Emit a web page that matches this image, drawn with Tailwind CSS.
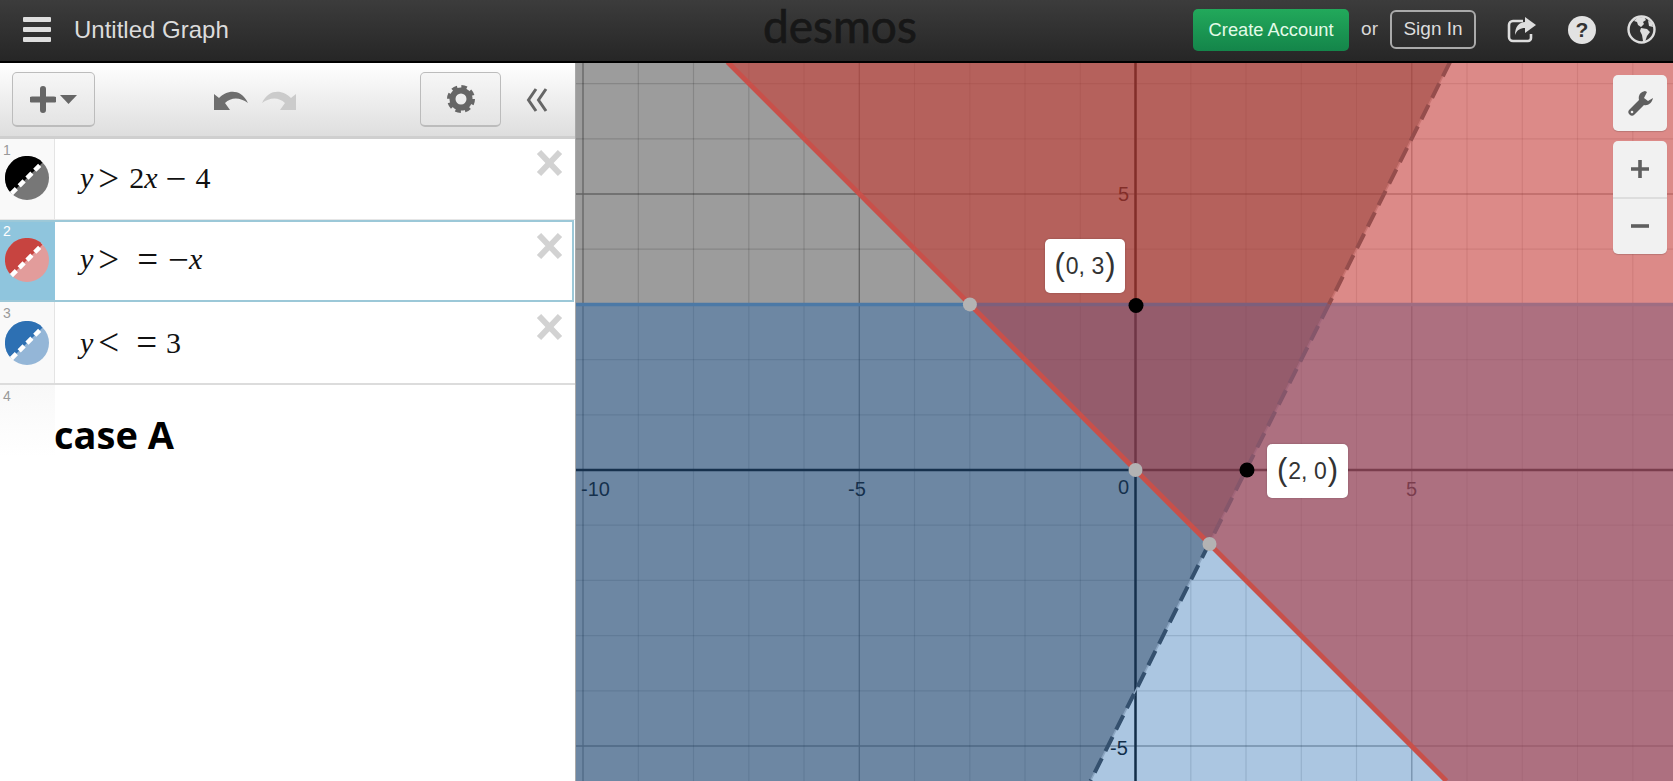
<!DOCTYPE html>
<html lang="en">
<head>
    <meta charset="UTF-8">
    <title>Desmos | Untitled Graph</title>
    <script src="https://cdn.jsdelivr.net/npm/@tailwindcss/browser@4"></script>
</head>
<body class="flex flex-col h-[781px] w-[1673px] overflow-hidden bg-white font-['Liberation_Sans',Arial,sans-serif]">

    <!-- top bar -->
    <header class="relative flex items-center h-[63px] pb-[2px] shrink-0 bg-linear-to-b from-[#3c3c3c] to-[#262626] border-b-2 border-black">
        <div class="flex flex-col gap-[5px] ml-[23px] w-[28px]">
            <span class="h-[5px] rounded-[1px] bg-[#dedede]"></span>
            <span class="h-[5px] rounded-[1px] bg-[#dedede]"></span>
            <span class="h-[5px] rounded-[1px] bg-[#dedede]"></span>
        </div>
        <span class="ml-[23px] text-[24px] text-[#dcdcdc]">Untitled Graph</span>
        <span class="absolute left-[763px] top-[-5px] font-['Lato',sans-serif] text-[46px] leading-[62px] text-[#171717] [-webkit-text-stroke:0.7px_#171717]">desmos</span>

        <div class="ml-auto flex items-center mr-[17px]">
            <a class="flex items-center justify-center w-[156px] h-[42px] rounded-[5px] bg-linear-to-b from-[#22a95b] to-[#14854a] text-[18.3px] text-[#e3fbe8]">Create Account</a>
            <span class="ml-[12px] text-[19px] text-[#d8d8d8]">or</span>
            <a class="ml-[12px] flex items-center justify-center w-[86px] h-[39px] rounded-[6px] border-2 border-[#aaaaaa] text-[19px] text-[#dddddd]">Sign In</a>
            <svg class="ml-[31px]" width="29" height="26" viewBox="0 0 29 26">
                <path d="M16 4H6a4 4 0 0 0-4 4v12a4 4 0 0 0 4 4h15a3 3 0 0 0 3-3v-4" fill="none" stroke="#dedede" stroke-width="2.6"/>
                <path d="M18 0l11 8-11 8v-5c-5 0-8 2-10 7 0-8 4-13 10-13z" fill="#dedede"/>
            </svg>
            <span class="ml-[32px] flex items-center justify-center w-[28px] h-[28px] rounded-full bg-[#e2e2e2] text-[21px] font-bold text-[#333333]">?</span>
            <svg class="ml-[31px]" width="29" height="29" viewBox="0 0 29 29">
                <circle cx="14.5" cy="14.5" r="13" fill="#333333" stroke="#dedede" stroke-width="2.4"/>
                <path d="M10 3l7-1 2 3-3 2 1 2-3 3-3-2-1-3-3-1z" fill="#dedede"/>
                <path d="M14 13l6 1 3 3-3 4-2 6-2-1-1-6-2-4z" fill="#dedede"/>
                <path d="M21 5l4 3 1 4-4-1z" fill="#dedede"/>
            </svg>
        </div>
    </header>

    <main class="flex flex-1 min-h-0">
        <!-- expression list -->
        <aside class="flex flex-col w-[575px] shrink-0 bg-white">
            <div class="relative flex items-center h-[76px] shrink-0 bg-linear-to-b from-white to-[#dedede] border-b-[3px] border-[#cfcfcf]">
                <button class="flex items-center justify-center gap-[4px] ml-[12px] w-[83px] h-[55px] rounded-[5px] border border-[#bcbcbc] bg-linear-to-b from-[#f6f6f6] to-[#e4e4e4] border-b-2">
                    <svg width="26" height="27" viewBox="0 0 26 27"><path d="M13 3v21M2 13.5h22" stroke="#666666" stroke-width="6" stroke-linecap="round"/></svg>
                    <svg width="17" height="9" viewBox="0 0 17 9"><path d="M0 0h17l-8.500 9z" fill="#666666"/></svg>
                </button>
                <svg class="ml-[119px]" width="34" height="20" viewBox="0 0 34 20"><path d="M0 20V4l5 4C12 1 26-3 34 13 26 7 17 7 11 13l5 7z" fill="#6e6e6e"/></svg>
                <svg class="ml-[14px]" width="34" height="20" viewBox="0 0 34 20"><path d="M34 20V4l-5 4C22 1 8-3 0 13 8 7 17 7 23 13l-5 7z" fill="#cbcbcb"/></svg>
                <button class="flex items-center justify-center ml-[124px] w-[81px] h-[55px] rounded-[5px] border border-[#bcbcbc] border-b-2 bg-linear-to-b from-[#f6f6f6] to-[#e4e4e4]">
                    <svg width="28" height="28" viewBox="0 0 28 28">
                        <circle cx="14" cy="14" r="8.500" fill="none" stroke="#666666" stroke-width="6"/>
                        <circle cx="14" cy="14" r="12" fill="none" stroke="#666666" stroke-width="4" stroke-dasharray="5.420 4"/>
                    </svg>
                </button>
                <svg class="ml-[25px]" width="23" height="26" viewBox="0 0 23 26"><path d="M10 2L2.500 13 10 24M20 2l-7.500 11L20 24" fill="none" stroke="#666666" stroke-width="3"/></svg>
            </div>

            <div class="relative flex h-[81px] shrink-0 border-b border-[#e6e6e6]">
                <div class="relative w-[55px] shrink-0 bg-[#f9f9f9] border-r border-[#e4e4e4]">
                    <span class="absolute left-[3px] top-[4px] text-[14px] leading-none text-[#999999]">1</span>
                    <svg class="absolute left-[5px] top-[17px]" width="44" height="44" viewBox="0 0 44 44">
                        <circle cx="22" cy="22" r="22" fill="#777777"/>
                        <path d="M6.400 37.600A22 22 0 0 1 37.600 6.400z" fill="#000000"/>
                        <path d="M6.400 37.600L37.600 6.400" stroke="#ffffff" stroke-width="4.500" stroke-dasharray="7 4"/>
                    </svg>
                </div>
                <div class="flex items-center pl-[25px] pb-[2px] font-['Liberation_Serif',serif] text-[30px] leading-none text-[#111111]"><i>y</i><span class="ml-[5px] mr-[10px] text-[37px]">&gt;</span>2<i>x</i><span class="ml-[8px] mr-[9px] text-[37px]">−</span>4</div>
                <svg class="absolute left-[536px] top-[10px]" width="27" height="28" viewBox="0 0 27 28"><path d="M3 3l21 22M24 3L3 25" stroke="#d2d2d2" stroke-width="6"/></svg>
            </div>

            <div class="relative flex h-[82px] shrink-0 border-2 border-[#9cc8d8] border-l-0 mr-[1px]">
                <div class="relative w-[55px] shrink-0 bg-[#8fc5dd]">
                    <span class="absolute left-[3px] top-[2px] text-[14px] leading-none text-white">2</span>
                    <svg class="absolute left-[5px] top-[16px]" width="44" height="44" viewBox="0 0 44 44">
                        <circle cx="22" cy="22" r="22" fill="#e29c9b"/>
                        <path d="M6.400 37.600A22 22 0 0 1 37.600 6.400z" fill="#c74440"/>
                        <path d="M6.400 37.600L37.600 6.400" stroke="#ffffff" stroke-width="4.500" stroke-dasharray="7 4"/>
                    </svg>
                </div>
                <div class="flex items-center pl-[25px] pb-[4px] font-['Liberation_Serif',serif] text-[30px] leading-none text-[#111111]"><i>y</i><span class="ml-[5px] mr-[18px] text-[37px]">&gt;</span><span class="mr-[10px] text-[37px]">=</span><span class="text-[37px]">−</span><i>x</i></div>
                <svg class="absolute left-[536px] top-[10px]" width="27" height="28" viewBox="0 0 27 28"><path d="M3 3l21 22M24 3L3 25" stroke="#d2d2d2" stroke-width="6"/></svg>
            </div>

            <div class="relative flex h-[83px] shrink-0 border-b-2 border-[#dcdcdc]">
                <div class="relative w-[55px] shrink-0 bg-[#f9f9f9] border-r border-[#e4e4e4]">
                    <span class="absolute left-[3px] top-[4px] text-[14px] leading-none text-[#999999]">3</span>
                    <svg class="absolute left-[5px] top-[19px]" width="44" height="44" viewBox="0 0 44 44">
                        <circle cx="22" cy="22" r="22" fill="#94b6d7"/>
                        <path d="M6.400 37.600A22 22 0 0 1 37.600 6.400z" fill="#2d70b3"/>
                        <path d="M6.400 37.600L37.600 6.400" stroke="#ffffff" stroke-width="4.500" stroke-dasharray="7 4"/>
                    </svg>
                </div>
                <div class="flex items-center pl-[25px] font-['Liberation_Serif',serif] text-[30px] leading-none text-[#111111]"><i>y</i><span class="ml-[5px] mr-[17px] text-[37px]">&lt;</span><span class="mr-[9px] text-[37px]">=</span>3</div>
                <svg class="absolute left-[536px] top-[11px]" width="27" height="28" viewBox="0 0 27 28"><path d="M3 3l21 22M24 3L3 25" stroke="#d2d2d2" stroke-width="6"/></svg>
            </div>

            <div class="relative flex h-[72px] shrink-0">
                <div class="relative w-[55px] shrink-0 bg-linear-to-b from-[#f8f8f8] to-white">
                    <span class="absolute left-[3px] top-[4px] text-[14px] leading-none text-[#999999]">4</span>
                </div>
                <span class="mt-[24px] ml-[-1px] font-['Open_Sans',sans-serif] font-bold text-[38px] leading-[50px] text-black">case A</span>
            </div>
        </aside>

        <!-- graph paper -->
        <section class="relative flex-1 overflow-hidden bg-white border-l border-[#a8a8a8]">
            <svg class="absolute left-[-1px] top-[-1px]" width="1098" height="719" viewBox="575 62 1098 719">
                <!-- minor grid -->
                <g stroke="#000000" stroke-opacity="0.14" stroke-width="1.200">
                    <path d="M638.300 62V781M693.500 62V781M748.800 62V781M804 62V781M914.500 62V781M969.800 62V781M1025 62V781M1080.300 62V781M1190.800 62V781M1246 62V781M1301.300 62V781M1356.500 62V781M1467 62V781M1522.300 62V781M1577.500 62V781M1632.800 62V781"/>
                    <path d="M575 83.600H1673M575 138.800H1673M575 249.200H1673M575 304.400H1673M575 359.600H1673M575 414.800H1673M575 525.200H1673M575 580.400H1673M575 635.600H1673M575 690.800H1673"/>
                </g>
                <!-- major grid -->
                <g stroke="#000000" stroke-opacity="0.36" stroke-width="1.300">
                    <path d="M583 62V781M859.300 62V781M1411.800 62V781M575 194H1673M575 746H1673"/>
                </g>
                <!-- axes -->
                <path d="M1135.500 62V781M575 470H1673" stroke="#000000" stroke-width="2.500"/>

                <!-- tick labels -->
                <g font-family="Liberation Sans, Arial, sans-serif" font-size="20" fill="#000000">
                    <text x="581" y="496">-10</text>
                    <text x="848" y="496">-5</text>
                    <text x="1118" y="494">0</text>
                    <text x="1406" y="496">5</text>
                    <text x="1118" y="201">5</text>
                    <text x="1110" y="755">-5</text>
                </g>

                <!-- shaded regions -->
                <polygon points="575,62 727.500,62 969.900,304.400 575,304.400" fill="#000000" fill-opacity="0.39"/>
                <polygon points="727.500,62 1450,62 1328.900,304.400 969.900,304.400" fill="rgb(162,57,51)" fill-opacity="0.8"/>
                <polygon points="1450,62 1673,62 1673,304.400 1328.900,304.400" fill="rgb(199,70,66)" fill-opacity="0.63"/>
                <polygon points="575,304.400 969.900,304.400 1209.100,543.600 1090.500,781 575,781" fill="rgb(33,73,115)" fill-opacity="0.66"/>
                <polygon points="969.900,304.400 1328.900,304.400 1209.100,543.600" fill="rgb(130,64,82)" fill-opacity="0.85"/>
                <polygon points="1328.900,304.400 1673,304.400 1673,781 1446.500,781 1209.100,543.600" fill="rgb(152,76,96)" fill-opacity="0.8"/>
                <polygon points="1209.100,543.600 1446.500,781 1090.500,781" fill="rgb(45,112,179)" fill-opacity="0.4"/>

                <!-- seams under the dashes, so the paper doesn't show between polygons -->
                <path d="M1450 62L1328.900 304.400" stroke="#c87370" stroke-width="1.500"/>
                <path d="M1328.900 304.400L1209.100 543.600" stroke="#a1667a" stroke-width="1.500"/>
                <path d="M1209.100 543.600L1090.500 781" stroke="#8ca6c2" stroke-width="1.500"/>

                <!-- boundary lines -->
                <path d="M575 304.400H969.900" stroke="#4c79a6" stroke-width="3.500"/>
                <path d="M969.900 304.400H1328.900" stroke="#7d5f7c" stroke-width="3.500"/>
                <path d="M1328.900 304.400H1673" stroke="#9f6d82" stroke-width="3.500"/>
                <path d="M1450 62L1328.900 304.400" stroke="#954d4c" stroke-width="4" stroke-dasharray="16 8"/>
                <path d="M1328.900 304.400L1209.100 543.600" stroke="#85566a" stroke-width="4" stroke-dasharray="16 8"/>
                <path d="M1209.100 543.600L1090.500 781" stroke="#34506e" stroke-width="4" stroke-dasharray="16 8"/>
                <path d="M727.500 62L1446.500 781" stroke="#c8504a" stroke-width="5"/>

                <!-- points -->
                <circle cx="969.900" cy="304.400" r="7" fill="#b3b3b3"/>
                <circle cx="1135.500" cy="470" r="7" fill="#b3b3b3"/>
                <circle cx="1209.500" cy="544" r="7" fill="#b3b3b3"/>
                <circle cx="1136" cy="305.500" r="7.500" fill="#000000"/>
                <circle cx="1247" cy="470" r="7.500" fill="#000000"/>
            </svg>

            <!-- point labels -->
            <div class="absolute left-[469px] top-[176px] flex items-center justify-center w-[80px] h-[54px] rounded-[5px] bg-white text-[#333333] shadow-[0_0_2px_rgba(0,0,0,0.25)]">
                <span class="text-[31px] font-light leading-none pb-[3px]">(</span><span class="text-[23px] mx-[1px]">0, 3</span><span class="text-[31px] font-light leading-none pb-[3px]">)</span>
            </div>
            <div class="absolute left-[691px] top-[381px] flex items-center justify-center w-[81px] h-[54px] rounded-[5px] bg-white text-[#333333] shadow-[0_0_2px_rgba(0,0,0,0.25)]">
                <span class="text-[31px] font-light leading-none pb-[3px]">(</span><span class="text-[23px] mx-[1px]">2, 0</span><span class="text-[31px] font-light leading-none pb-[3px]">)</span>
            </div>

            <!-- graph controls -->
            <div class="absolute right-[6px] top-[12px] flex flex-col gap-[10px] w-[54px]">
                <button class="flex items-center justify-center h-[56px] rounded-[5px] bg-[#f1f1f1] shadow-[0_1px_1px_rgba(0,0,0,0.15)]">
                    <svg width="25" height="25" viewBox="0 0 25 25"><path d="M17 0C12 1 10 5 11 9L1.500 18.500a3.300 3.300 0 0 0 5 5L16 14c4 1 8-2 9-7l-5 3-4-3 3-6z" fill="#5f5f5f"/><circle cx="4" cy="21" r="1.300" fill="#f1f1f1"/></svg>
                </button>
                <div class="flex flex-col h-[113px] rounded-[5px] bg-[#f1f1f1] shadow-[0_1px_1px_rgba(0,0,0,0.15)]">
                    <button class="flex items-center justify-center flex-1 border-b-2 border-[#dddddd]">
                        <svg width="18" height="18" viewBox="0 0 18 18"><path d="M9 0v18M0 9h18" stroke="#5f5f5f" stroke-width="3.600"/></svg>
                    </button>
                    <button class="flex items-center justify-center flex-1">
                        <svg width="18" height="4" viewBox="0 0 18 4"><path d="M0 2h18" stroke="#5f5f5f" stroke-width="3.600"/></svg>
                    </button>
                </div>
            </div>
        </section>
    </main>
</body>
</html>
